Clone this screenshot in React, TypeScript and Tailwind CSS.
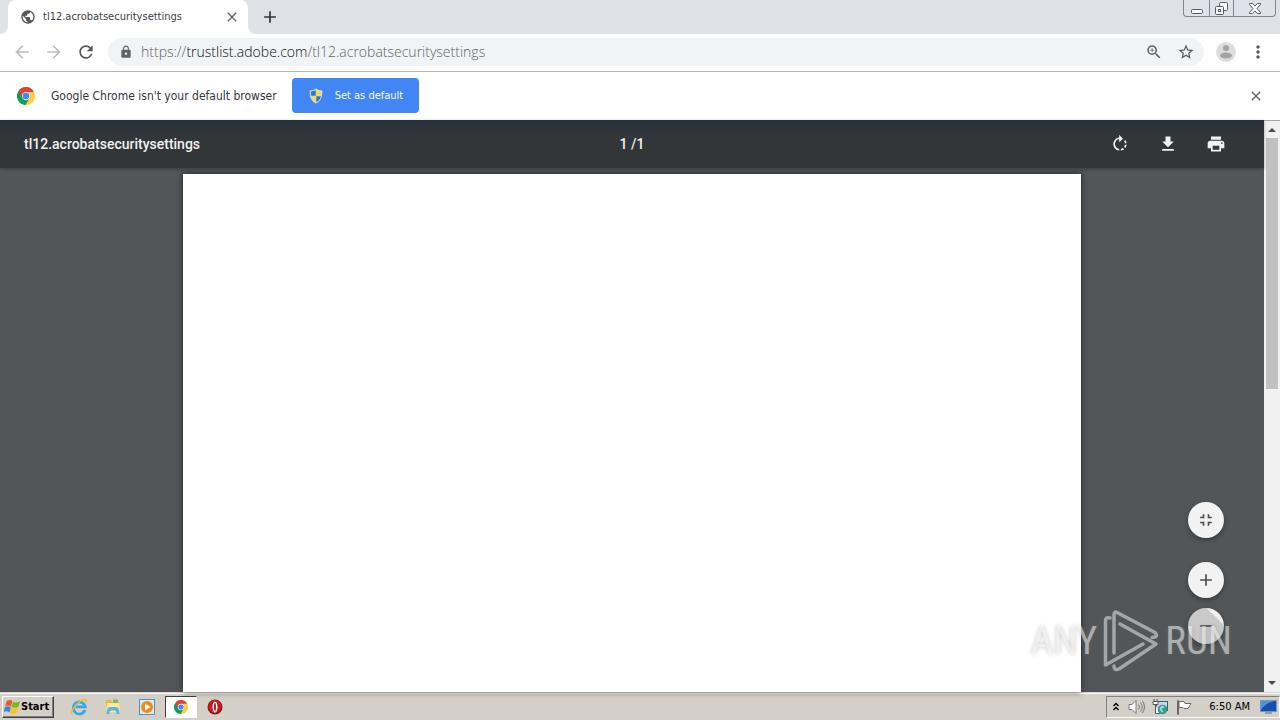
import type { ReactNode } from "react";
import {
  MdAdd,
  MdArrowBack,
  MdArrowForward,
  MdClose,
  MdFileDownload,
  MdFullscreenExit,
  MdLock,
  MdMoreVert,
  MdPrint,
  MdPublic,
  MdRefresh,
  MdRemove,
  MdRotateRight,
  MdStarBorder,
  MdZoomIn,
} from "react-icons/md";

function ChromeLogo({ className }: { className: string }) {
  return (
    <svg viewBox="0 0 48 48" className={className} aria-hidden="true">
      <path d="M24 24 L3.2 12 A24 24 0 0 1 44.8 12 Z" fill="#db4437" />
      <path d="M24 24 L24 48 A24 24 0 0 1 3.2 12 Z" fill="#0f9d58" />
      <path d="M24 24 L44.8 12 A24 24 0 0 1 24 48 Z" fill="#ffcd40" />
      <path d="M24 13 H45.3 L33.5 29.5 Z" fill="#ffcd40" />
      <path d="M33.5 29.5 L22.8 48 L20 34 Z" fill="#0f9d58" />
      <path d="M14.5 29.5 L3.8 11 L24 13 Z" fill="#db4437" />
      <circle cx="24" cy="24" r="11" fill="#f1f1f1" />
      <circle cx="24" cy="24" r="8.8" fill="#4285f4" />
    </svg>
  );
}

function ShieldIcon() {
  return (
    <svg viewBox="0 0 16 16" className="size-4" aria-hidden="true">
      <path d="M8 .5 C10 2 12 2.5 14.2 2.3 C14.8 8.500 13 13 8 15.600 C3 13 1.200 8.500 1.800 2.300 C4 2.500 6 2 8 .5Z" fill="#d5dbe0" />
      <path d="M7.700 2 C6.200 3 4.500 3.400 3 3.400 L3 7.700 H7.700Z" fill="#2878c8" />
      <path d="M8.300 2 C9.800 3 11.500 3.400 13 3.400 L13 7.700 H8.300Z" fill="#fbd93c" />
      <path d="M3.100 8.300 H7.700 V14.200 C5 12.700 3.500 10.800 3.100 8.300Z" fill="#fbd93c" />
      <path d="M12.900 8.300 H8.300 V14.200 C11 12.700 12.500 10.800 12.900 8.300Z" fill="#2878c8" />
    </svg>
  );
}

function WindowControls() {
  const cell = "flex h-full items-center justify-center";
  return (
    <div className="flex h-[17px] w-[93px] rounded-b border border-t-0 border-[#80858f] bg-[#dfe2e8]">
      <button aria-label="Minimize" className={`${cell} w-[25px]`}>
        <svg viewBox="0 0 12 12" className="size-3" fill="#f8f8f8" stroke="#565c66">
          <rect x=".5" y="7.500" width="11" height="4" rx="1" />
        </svg>
      </button>
      <button aria-label="Restore" className={`${cell} w-[25px] border-x border-[#80858f]`}>
        <svg viewBox="0 0 13 13" className="size-[13px]" fill="#f8f8f8" stroke="#565c66">
          <rect x="4.500" y=".5" width="8" height="8" rx="1" />
          <rect x=".5" y="4.500" width="8" height="8" rx="1" />
          <rect x="3.500" y="7.500" width="2" height="2" />
        </svg>
      </button>
      <button aria-label="Close window" className={`${cell} flex-1`}>
        <svg viewBox="0 0 12 11" className="h-[11px] w-3" fill="#f8f8f8" stroke="#565c66">
          <path d="M.5.5h3L6 3 8.500.5h3v1L8 5.500l3.500 4v1h-3L6 8l-2.500 2.500h-3v-1L4 5.500.5 1.500z" />
        </svg>
      </button>
    </div>
  );
}

function TabStrip() {
  return (
    <header className="flex h-[34px] shrink-0 bg-white">
      <div className="h-full w-2 rounded-br-lg bg-[#dee1e6]" />
      <div className="flex h-full w-60 bg-[#dee1e6]">
        <div className="flex h-full flex-1 items-center rounded-t-lg bg-white pr-2 pl-3">
          <MdPublic className="size-4 text-[#55585c]" />
          <span className="ml-[7px] flex-1 text-[11px] leading-4 text-[#3c4043]">
            tl12.acrobatsecuritysettings
          </span>
          <button aria-label="Close tab">
            <MdClose className="size-4 text-[#5f6368]" />
          </button>
        </div>
      </div>
      <div className="flex h-full flex-1 rounded-bl-lg bg-[#dee1e6] pr-1">
        <button aria-label="New tab" className="flex h-full w-11 items-center justify-center">
          <MdAdd className="size-5 text-[#303338]" />
        </button>
        <div className="flex-1" />
        <WindowControls />
      </div>
    </header>
  );
}

function AddressBar() {
  return (
    <nav className="flex h-[38px] shrink-0 items-center border-b border-[#b6b6b6] bg-white px-3 pb-px">
      <button aria-label="Back" className="mr-3"><MdArrowBack className="size-5 text-[#bbbdbf]" /></button>
      <button aria-label="Forward" className="mr-3"><MdArrowForward className="size-5 text-[#bbbdbf]" /></button>
      <button aria-label="Reload" className="mr-3"><MdRefresh className="size-5 text-[#55585c]" /></button>
      <div className="flex h-7 flex-1 items-center rounded-full bg-[#f1f3f4] pr-[9px] pl-[11px]">
        <MdLock className="size-[14px] text-[#5f6368]" />
        <span className="ml-2 flex-1 font-['Open_Sans','Noto_Sans',sans-serif] text-[14px] leading-5 font-light text-[#5f6368]">
          https://<span className="text-[#101114]">trustlist.adobe.com</span>/tl12.acrobatsecuritysettings
        </span>
        <button aria-label="Zoom" className="mr-[14px]"><MdZoomIn className="size-[18px] text-[#5f6368]" /></button>
        <button aria-label="Bookmark this page"><MdStarBorder className="size-[18px] text-[#55585c]" /></button>
      </div>
      <button aria-label="Profile" className="ml-3">
        <svg viewBox="0 0 20 20" className="size-5">
          <circle cx="10" cy="10" r="10" fill="#dddddd" />
          <circle cx="10" cy="6" r="3" fill="#a3a3a3" />
          <ellipse cx="10" cy="13.500" rx="6" ry="3" fill="#a3a3a3" />
        </svg>
      </button>
      <button aria-label="Menu" className="ml-3"><MdMoreVert className="size-5 text-[#55585c]" /></button>
    </nav>
  );
}

function InfoBar() {
  return (
    <section className="flex h-12 shrink-0 items-center bg-white pr-4 pb-px pl-[17px]">
      <ChromeLogo className="size-[18px]" />
      <p className="ml-4 text-[12px] leading-4 text-[#333639]">Google Chrome isn't your default browser</p>
      <button className="ml-[15px] flex h-[35px] w-[127px] items-center rounded bg-[#4285f4] pl-4 text-[11px] leading-4 text-white">
        <ShieldIcon />
        <span className="ml-[11px]">Set as default</span>
      </button>
      <div className="flex-1" />
      <button aria-label="Dismiss"><MdClose className="size-4 text-[#5f6368]" /></button>
    </section>
  );
}

function RoundButton({ label, children, className }: { label: string; children: ReactNode; className: string }) {
  return (
    <button
      aria-label={label}
      className={`flex size-9 items-center justify-center rounded-full text-[#4d4d4d] shadow-[0_2px_5px_rgba(0,0,0,0.35)] ${className}`}
    >
      {children}
    </button>
  );
}

function Watermark() {
  return (
    <div className="pointer-events-none absolute right-8 bottom-5 flex items-center font-['Roboto_Condensed','Liberation_Sans_Narrow','Liberation_Sans',sans-serif] text-[39px] leading-[62px] text-white/50 [text-shadow:0_0_4px_rgba(120,120,120,0.4)]">
      <span>ANY</span>
      <svg viewBox="0 0 56 62" className="mx-[6px] h-[62px] w-14" fill="none" stroke="#a4a7a9" strokeWidth="3.500" strokeLinejoin="round" strokeLinecap="round">
        <path d="M7 8 Q2.500 6.500 2.500 11 V55 L40 34" />
        <path d="M11 43 V5 Q11 .5 15 3 L52 22.500 Q56 27 49 27.500" />
        <path d="M17 14 L53 34 L16 59 Q11 61 11 56" />
      </svg>
      <span>RUN</span>
    </div>
  );
}

function Viewer() {
  return (
    <main className="flex min-h-0 flex-1 bg-[#525659]">
      <div className="relative flex min-w-0 flex-1 flex-col">
        <div className="z-10 flex h-12 shrink-0 items-center bg-[#323639] bg-linear-to-b from-[#26313a] to-[#323639] to-30% px-6 font-[Roboto,sans-serif] text-[14px] leading-5 font-medium text-[#f1f1f1] shadow-[0_1px_3px_rgba(0,0,0,0.3)]">
          <h1 className="flex-1">tl12.acrobatsecuritysettings</h1>
          <span>1 /1</span>
          <div className="flex flex-1 justify-end gap-7">
            <button aria-label="Rotate clockwise"><MdRotateRight className="size-5" /></button>
            <button aria-label="Download"><MdFileDownload className="size-5" /></button>
            <button aria-label="Print" className="mr-[14px]"><MdPrint className="size-5" /></button>
          </div>
        </div>
        <div className="flex min-h-0 flex-1 justify-center pt-[6px]">
          <div className="w-[71%] bg-white shadow-[0_0_6px_rgba(0,0,0,0.6)]" />
        </div>
        <div className="absolute right-10 bottom-12 flex flex-col">
          <RoundButton label="Fit to page" className="mb-6 bg-[#f2f2f2]"><MdFullscreenExit className="size-5" /></RoundButton>
          <RoundButton label="Zoom in" className="mb-[10px] bg-[#f2f2f2]"><MdAdd className="size-5" /></RoundButton>
          <RoundButton label="Zoom out" className="bg-linear-to-tr from-[#c9c9c9] from-74% to-[#f2f2f2] to-78%"><MdRemove className="size-5" /></RoundButton>
        </div>
        <Watermark />
      </div>
      <div className="flex w-4 flex-col items-center border-t border-[#a5a5a5] bg-[#f1f1f1]">
        <button aria-label="Scroll up" className="flex h-[17px] w-full items-center justify-center">
          <svg viewBox="0 0 8 4" className="h-1 w-2"><path d="M0 4 4 0l4 4z" fill="#4a4a4a" /></svg>
        </button>
        <div className="h-[251px] w-3 bg-[#c1c1c1]" />
        <div className="flex-1" />
        <button aria-label="Scroll down" className="flex h-[18px] w-full items-center justify-center">
          <svg viewBox="0 0 8 4" className="h-1 w-2"><path d="M0 0h8L4 4z" fill="#4a4a4a" /></svg>
        </button>
      </div>
    </main>
  );
}

function WindowsFlag() {
  return (
    <svg viewBox="0 0 16 16" className="size-4" aria-hidden="true">
      <path d="M2.500 2.500Q5 0 8.300 2L7 7.500Q4 5.500 1.200 7.200Z" fill="#ee5a24" />
      <path d="M8.900 2.500Q12 4.500 16 2.300L14.500 7.900Q11 9.500 7.600 7.900Z" fill="#79b928" />
      <path d="M1 8Q4 6.300 6.800 8.300L5.500 13.500Q3 11.500 -.3 13Z" fill="#3d84d6" />
      <path d="M7.400 8.700Q11 10.300 14.300 8.600L13 13.800Q9 15.700 6 13.800Z" fill="#fcc419" />
    </svg>
  );
}

function Taskbar() {
  return (
    <footer className="flex h-7 shrink-0 items-center border-t border-[#d4d0c8] bg-[#d4d0c8] pl-[2px] text-[11px] leading-4 text-black shadow-[inset_0_1px_0_#fff]">
      <button className="flex h-[22px] w-[52px] items-center gap-px border border-t-white border-r-[#404040] border-b-[#404040] border-l-white pl-px font-bold shadow-[inset_-1px_-1px_0_#808080]">
        <WindowsFlag />
        Start
      </button>
      <div className="ml-2 flex items-center">
        <button aria-label="Internet Explorer" className="flex w-[34px] justify-center">
          <svg viewBox="0 0 18 18" className="size-[18px]" fill="none">
            <path d="M15 12A6 6 0 1 1 15.200 8.800H5.500" stroke="#35a8e6" strokeWidth="2.800" />
            <path d="M2.800 15.500C-1 19 2 10 8 5S18 0 15.800 4.500" stroke="#f0bd36" strokeWidth="1.500" />
          </svg>
        </button>
        <button aria-label="File explorer" className="flex w-[34px] justify-center">
          <svg viewBox="0 0 18 18" className="size-[18px]">
            <path d="M2 2h5l1 2h7v10H2z" fill="#dfb94b" />
            <path d="M9 1.500h5V5H9z" fill="#79bb77" />
            <path d="M3 5h12l1 9H2z" fill="#ffea94" />
            <path d="M2.500 16q0-7 3.500-7h6q3.500 0 3.500 7h-3q0-3.500-2-3.500h-3q-2 0-2 3.500z" fill="#5eb4e4" />
          </svg>
        </button>
        <button aria-label="Media player" className="flex w-[34px] justify-center">
          <svg viewBox="0 0 18 18" className="size-[18px]">
            <rect x="1.500" y="1.500" width="15" height="15" fill="#d9ebf7" stroke="#4d91c9" />
            <circle cx="9" cy="9" r="6" fill="#f18a16" />
            <path d="M7 5.500 12.500 9 7 12.500z" fill="#fff" />
          </svg>
        </button>
        <button aria-label="Google Chrome" className="ml-px flex h-[22px] w-8 items-center justify-center border border-t-[#404040] border-r-white border-b-white border-l-[#404040] bg-white">
          <ChromeLogo className="size-[14px]" />
        </button>
        <button aria-label="Opera" className="flex w-9 justify-center">
          <svg viewBox="0 0 16 16" className="size-4">
            <circle cx="8" cy="8" r="7.500" fill="#8f1014" />
            <circle cx="8" cy="7.500" r="6.500" fill="#c81b20" />
            <ellipse cx="8" cy="8" rx="2.500" ry="5.500" fill="#fff" />
            <ellipse cx="8" cy="8" rx="1" ry="4" fill="#a81b20" />
          </svg>
        </button>
      </div>
      <div className="flex-1" />
      <div className="flex h-[22px] items-center border border-t-[#808080] border-r-white border-b-white border-l-[#808080] pr-[2px] pl-[6px]">
        <button aria-label="Show hidden icons">
          <svg viewBox="0 0 6 9" className="h-[9px] w-[6px]" fill="none" stroke="#000" strokeWidth="1.400"><path d="m.5 4L3 1.500 5.500 4M.5 8 3 5.500 5.500 8" /></svg>
        </button>
        <svg viewBox="0 0 17 16" className="ml-[9px] h-4 w-[17px]" fill="#fff" stroke="#77797b">
          <path d="M1 5.500h3l4-4v13l-4-4H1z" />
          <path d="M10.500 5.500q2 2.500 0 5M12.500 3.500q3.500 4.500 0 9M14.500 2q4 6 0 12" fill="none" />
        </svg>
        <svg viewBox="0 0 17 16" className="ml-[7px] h-4 w-[17px]">
          <rect x="4.500" y="2.500" width="11" height="9" fill="#b9ddeb" stroke="#4f555b" />
          <path d="M2 0v3M5 0v3M1 2.500h5v3H1zM3.500 6v8.500H8" fill="#fff" stroke="#55595c" />
          <circle cx="10.500" cy="10.500" r="4.800" fill="#319e8b" />
          <path d="M7.500 9q3-4 5-1l-3 2 2 3q-3 1-4-4z" fill="#9bd5ee" />
        </svg>
        <svg viewBox="0 0 16 16" className="ml-[7px] size-4" fill="#fff" stroke="#686b6d">
          <path d="M1.500 1.500h1v14h-1zM3 2.500h5l1 2h6l-3 5H8l-1-1H3z" />
        </svg>
        <time className="ml-[17px]">6:50 AM</time>
        <svg viewBox="0 0 17 14" className="ml-[10px] h-[14px] w-[17px]">
          <rect x=".5" y=".5" width="16" height="11" fill="#174eab" stroke="#7895bd" />
          <path d="M1 10Q6 2 16 1V1H1z" fill="#4a93df" />
          <path d="M5 13h7" stroke="#536a8d" />
        </svg>
      </div>
    </footer>
  );
}

export default function App() {
  return (
    <div className="flex h-screen flex-col overflow-hidden font-['DejaVu_Sans_Condensed','DejaVu_Sans',sans-serif]">
      <TabStrip />
      <AddressBar />
      <InfoBar />
      <Viewer />
      <Taskbar />
    </div>
  );
}
